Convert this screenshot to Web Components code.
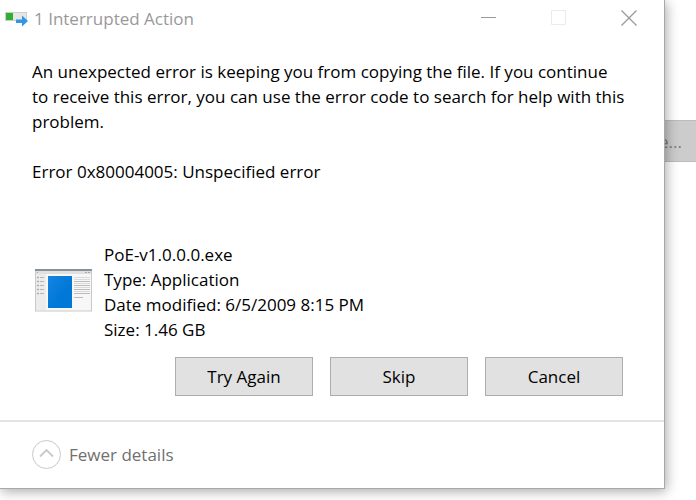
<!DOCTYPE html>
<html lang="en">
<head>
<meta charset="utf-8">
<title>1 Interrupted Action</title>
<style>
  html, body { height: 100%; }
  body { margin: 0; background: #fff; overflow: hidden; color: #000; font: 17px/25px "Open Sans", "Noto Sans", sans-serif; }
</style>
</head>
<body>
<desktop-view>
  <background-button slot="behind">e...</background-button>
  <action-dialog>
    <title-bar slot="title">1 Interrupted Action</title-bar>
    <error-message>
      <p>An unexpected error is keeping you from copying the file. If you continue<br>to receive this error, you can use the error code to search for help with this problem.</p>
      <p>Error 0x80004005: Unspecified error</p>
    </error-message>
    <file-summary>
      <div>PoE-v1.0.0.0.exe</div>
      <div>Type: Application</div>
      <div>Date modified: 6/5/2009 8:15 PM</div>
      <div>Size: 1.46 GB</div>
    </file-summary>
    <button-row>
      <push-button>Try Again</push-button>
      <push-button>Skip</push-button>
      <push-button>Cancel</push-button>
    </button-row>
    <details-toggle slot="footer">Fewer details</details-toggle>
  </action-dialog>
</desktop-view>
<script>
function define(name, html) {
  const template = document.createElement('template');
  template.innerHTML = html;
  customElements.define(name, class extends HTMLElement {
    constructor() {
      super();
      this.attachShadow({ mode: 'open' }).append(template.content.cloneNode(true));
    }
  });
}

define('desktop-view', `
  <style>
    :host { display: block; position: relative; height: 100%; padding: 0 31px 11px 0; box-sizing: border-box; overflow: hidden; }
    ::slotted([slot=behind]) { position: absolute; right: 0; top: 120px; }
  </style>
  <slot name="behind"></slot><slot></slot>`);

define('background-button', `
  <style>
    :host { display: block; width: 80px; }
    button { display: block; width: 100%; height: 42px; padding: 0 14px 0 0; border: 1px solid #bcbcbc; border-right: 0; background: #ccc; color: #7c7c7c; font: inherit; text-align: right; }
  </style>
  <button type="button"><slot></slot></button>`);

define('action-dialog', `
  <style>
    :host { display: flex; flex-direction: column; position: relative; height: 100%; box-sizing: border-box; background: #fff; border: solid #a8a8a8; border-width: 0 1px 1px 0; box-shadow: 1px 2px 12px rgba(0,0,0,.36); }
    main { flex: 1; display: flex; flex-direction: column; padding: 23px 32px 24px; }
    footer { border-top: 2px solid #e3e3e3; padding: 18px 32px 19px; }
  </style>
  <slot name="title"></slot>
  <main><slot></slot></main>
  <footer><slot name="footer"></slot></footer>`);

define('title-bar', `
  <style>
    :host { display: flex; align-items: center; height: 36px; padding-left: 5px; color: #999; }
    svg { display: block; }
    .name { flex: 1; margin-left: 5px; }
    nav { display: flex; }
    button { width: 70px; height: 34px; padding: 0; border: 0; background: none; display: grid; place-items: center; }
  </style>
  <svg width="24" height="18" viewBox="0 0 24 18" aria-hidden="true">
    <rect x=".5" y="3.5" width="21" height="8" fill="#e6e6e6" stroke="#cfcfcf"/>
    <rect x="1" y="4" width="7" height="7" fill="#2fb130"/>
    <path d="M11 10.500h6V6.500l6 5.500-6 5.500v-3.500h-6z" fill="#3296e6"/>
  </svg>
  <span class="name"><slot></slot></span>
  <nav aria-label="Window">
    <button type="button" aria-label="Minimize"><svg width="16" height="16"><path d="M0 7.500h15" stroke="#999"/></svg></button>
    <button type="button" aria-label="Maximize" disabled><svg width="16" height="16"><path d="M.5.5h14v14H.5z" fill="none" stroke="#ebebeb"/></svg></button>
    <button type="button" aria-label="Close"><svg width="16" height="16"><path d="M.5.5l15 15M15.500.5l-15 15" stroke="#999" stroke-width="1.300"/></svg></button>
  </nav>`);

define('error-message', `
  <style>
    :host { display: block; min-height: 183px; }
    ::slotted(p) { margin: 0 0 25px; }
  </style>
  <slot></slot>`);

define('file-summary', `
  <style>
    :host { display: flex; align-items: flex-start; gap: 11px; margin-bottom: 15px; }
    svg { display: block; flex: none; margin: 27px 0 0 3px; }
  </style>
  <svg width="58" height="44" viewBox="0 0 58 44" aria-hidden="true">
    <defs><linearGradient id="b" x1="0" y1="0" x2="1" y2="1"><stop offset="0" stop-color="#1685e2"/><stop offset=".6" stop-color="#0078d7"/><stop offset="1" stop-color="#0078d7"/></linearGradient></defs>
    <rect x=".5" y="1" width="56" height="41" fill="#f7f7f7" stroke="#c9c9c9"/>
    <rect x="1" y="2" width="55" height="3" fill="#e0e0e0"/>
    <rect x="1" y="5" width="10" height="36" fill="#ececec"/>
    <rect x="0" y="0" width="57" height="2" fill="#899196"/>
    <path d="M2 3.500h1M50 3.500h2M53 3.500h2" stroke="#aaa"/>
    <path d="M2 8.500h2M2 12.500h2M2 16.500h2M2 20.500h2M2 24.500h2" stroke="#aaa" stroke-width="1.500"/>
    <path d="M5 8.500h4M5 12.500h4M5 16.500h4M5 20.500h4M5 24.500h4" stroke="#b5b5b5"/>
    <path d="M39 8.500h16M39 10.500h16M39 14.500h16M39 18.500h16M39 22.500h16" stroke="#dadada"/>
    <path d="M39 12.500h16M39 16.500h16M39 20.500h16M39 24.500h16M39 28.500h9" stroke="#bcbcbc"/>
    <rect x="13" y="7" width="24" height="32" fill="url(#b)"/>
  </svg>
  <div><slot></slot></div>`);

define('button-row', `
  <style>
    :host { display: flex; justify-content: flex-end; gap: 17px; padding-right: 9px; }
  </style>
  <slot></slot>`);

define('push-button', `
  <style>
    :host { display: block; width: 138px; }
    button { display: block; width: 100%; height: 39px; padding: 0; border: 1px solid #adadad; background: #e1e1e1; color: #000; font: inherit; }
  </style>
  <button type="button"><slot></slot></button>`);

define('details-toggle', `
  <style>
    :host { display: block; }
    button { display: flex; align-items: center; gap: 8px; padding: 0; border: 0; background: none; color: #707070; font: inherit; }
    svg { display: block; }
  </style>
  <button type="button" aria-expanded="true">
    <svg width="29" height="29" viewBox="0 0 29 29" aria-hidden="true"><circle cx="14.500" cy="14.500" r="14" fill="none" stroke="#c8c8c8"/><path d="M8 16.500l6.500-6.500 6.500 6.500" fill="none" stroke="#c8c8c8" stroke-width="1.800"/></svg>
    <span><slot></slot></span>
  </button>`);
</script>
</body>
</html>
